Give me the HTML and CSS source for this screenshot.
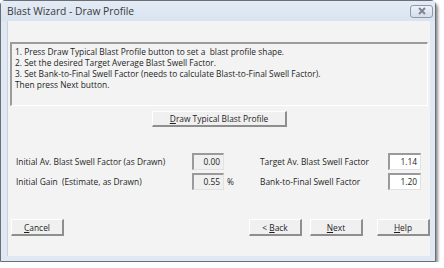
FILE: index.html
```html
<!DOCTYPE html>
<html>
<head>
  <meta charset="utf-8">
  <meta name="viewport" content="width=device-width">
  <title>Blast Wizard - Draw Profile</title>
  <link rel="stylesheet" href="styles.css">
</head>
<body>
  <div class="window">
    <div class="titlebar">
      <span class="title">Blast Wizard - Draw Profile</span>
      <span class="close-btn">
        <svg width="10" height="8" viewBox="0 0 10 8">
          <path d="M2 1 L8 7 M8 1 L2 7" stroke="#7d8794" stroke-width="2" fill="none"/>
        </svg>
      </span>
    </div>
    <div class="client">
      <div class="info-box">
        <div>1. Press Draw Typical Blast Profile button to set a&nbsp; blast profile shape.</div>
        <div>2. Set the desired Target Average Blast Swell Factor.</div>
        <div>3. Set Bank-to-Final Swell Factor (needs to calculate Blast-to-Final Swell Factor).</div>
        <div>Then press Next button.</div>
      </div>
      <div class="draw-row">
        <button class="btn btn-draw"><u>D</u>raw Typical Blast Profile</button>
      </div>
      <div class="fields">
        <span class="label">Initial Av. Blast Swell Factor (as Drawn)</span>
        <span class="field readonly">0.00</span>
        <span class="unit"></span>
        <span class="label">Target Av. Blast Swell Factor</span>
        <span class="field">1.14</span>

        <span class="label">Initial Gain&nbsp; (Estimate, as Drawn)</span>
        <span class="field readonly">0.55</span>
        <span class="unit">%</span>
        <span class="label">Bank-to-Final Swell Factor</span>
        <span class="field">1.20</span>
      </div>
      <div class="button-row">
        <button class="btn"><u>C</u>ancel</button>
        <div class="spacer"></div>
        <button class="btn">&lt; <u>B</u>ack</button>
        <button class="btn"><u>N</u>ext</button>
        <button class="btn btn-help"><u>H</u>elp</button>
      </div>
    </div>
  </div>
</body>
</html>
```

FILE: styles.css
```css
body {
  margin: 0;
  padding: 0;
  background-color: #fff;
  font-family: "Open Sans", "Noto Sans", sans-serif;
  font-size: 8.4px;
  color: #1e1e1e;
}

.window {
  width: 434px;
  height: 260px;
  border: 1px solid #6b6f75;
  border-radius: 5px 5px 0 0;
  background-color: #dfe8f3;
  box-shadow: 2px 3px 3px rgba(0, 0, 0, 0.45);
  display: flex;
  flex-direction: column;
}

.titlebar {
  height: 20px;
  display: flex;
  align-items: center;
  justify-content: space-between;
  padding-left: 6px;
  padding-right: 2px;
  background: linear-gradient(#e3ebf5, #d9e4f1);
}

.title {
  font-size: 10.3px;
  color: #3a3a3a;
}

.close-btn {
  width: 21px;
  height: 11px;
  border: 1px solid #8d9aab;
  border-radius: 3px;
  background: linear-gradient(#eef3f9, #d3dde9);
  display: flex;
  align-items: center;
  justify-content: center;
}

.client {
  margin: 0 5px 0 6px;
  height: 235px;
  background-color: #f3f3f3;
  border-left: 1px solid #c9d3de;
  display: flex;
  flex-direction: column;
}

.info-box {
  margin: 21px 2px 0 2px;
  height: 56px;
  padding: 2px 3px 3px 3px;
  border-top: 2px solid #9c9c9c;
  border-left: 2px solid #9c9c9c;
  border-right: 1px solid #fff;
  border-bottom: 1px solid #fff;
  line-height: 11px;
}

.draw-row {
  padding-left: 144px;
  margin-top: 5px;
}

.btn {
  font-family: inherit;
  font-size: inherit;
  color: #1e1e1e;
  height: 17px;
  width: 53px;
  padding: 0;
  background-color: #f0f0f0;
  border-top: 1px solid #fff;
  border-left: 1px solid #fff;
  border-right: 2px solid #8e8e8e;
  border-bottom: 2px solid #8e8e8e;
  border-radius: 0;
}

.btn-draw {
  width: 135px;
  height: 16px;
}

.fields {
  display: grid;
  grid-template-columns: 176px 32px 36px 128px 33px;
  row-gap: 3px;
  align-items: center;
  padding-left: 8px;
  margin-top: 26px;
}

.field {
  height: 17px;
  box-sizing: border-box;
  padding-right: 3px;
  text-align: right;
  line-height: 14px;
  background-color: #fff;
  border-top: 2px solid #9a9a9a;
  border-left: 2px solid #9a9a9a;
  border-right: 1px solid #e2e2e2;
  border-bottom: 1px solid #e2e2e2;
}

.field.readonly {
  background-color: #f0f0f0;
}

.unit {
  padding-left: 3px;
}

.button-row {
  display: flex;
  gap: 8px;
  margin-top: 29px;
  padding-left: 3px;
}

.spacer {
  flex: 1;
}

.btn-help {
  margin-left: 6px;
}
```
